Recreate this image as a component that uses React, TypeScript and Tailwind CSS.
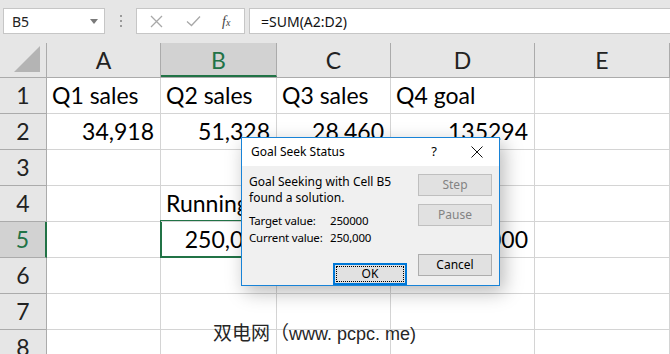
import React from "react";

const COLS = [
  { k: "A", w: 114 },
  { k: "B", w: 116 },
  { k: "C", w: 114 },
  { k: "D", w: 144 },
  { k: "E", w: 135 },
];

type Cell = { t: string; align?: "l" | "r" };
const DATA: Record<number, Record<string, Cell>> = {
  1: {
    A: { t: "Q1 sales" },
    B: { t: "Q2 sales" },
    C: { t: "Q3 sales" },
    D: { t: "Q4 goal" },
  },
  2: {
    A: { t: "34,918", align: "r" },
    B: { t: "51,328", align: "r" },
    C: { t: "28,460", align: "r" },
    D: { t: "135294", align: "r" },
  },
  4: {
    B: { t: "Running total" },
    D: { t: "Total goal" },
  },
  5: {
    B: { t: "250,000", align: "r" },
    D: { t: "250,000", align: "r" },
  },
};

const cellFont = { fontFamily: "Lato, 'Noto Sans', sans-serif" };
const uiFont = { fontFamily: "'Noto Sans', 'Open Sans', sans-serif" };

function Btn({
  label,
  disabled,
  primary,
}: {
  label: string;
  disabled?: boolean;
  primary?: boolean;
}) {
  if (primary) {
    return (
      <div className="w-[74px] h-[22px] border-2 border-[#0078d7] bg-[#e1e1e1] p-[1px]">
        <div className="w-full h-full border border-dotted border-[#000] flex items-center justify-center text-[12px] text-[#000] leading-none">
          {label}
        </div>
      </div>
    );
  }
  return (
    <div
      className={
        "w-[74px] h-[22px] border flex items-center justify-center text-[12px] leading-none " +
        (disabled
          ? "border-[#bfbfbf] bg-[#e1e1e1] text-[#838383]"
          : "border-[#adadad] bg-[#e1e1e1] text-[#000]")
      }
    >
      {label}
    </div>
  );
}

export default function App() {
  const rows = [1, 2, 3, 4, 5, 6, 7, 8];
  return (
    <div className="relative w-[670px] h-[354px] overflow-hidden bg-white">
      {/* formula bar */}
      <div className="h-[43px] bg-[#e6e6e6] flex items-start pt-[8px]" style={uiFont}>
        <div className="ml-[3px] w-[102px] h-[26px] bg-white border border-[#c6c6c6] flex items-center justify-between pl-[8px] pr-[6px]">
          <span className="text-[14px] text-[#222]">B5</span>
          <svg width="8" height="5" viewBox="0 0 8 5">
            <path d="M0 0 L8 0 L4 5 Z" fill="#7a7a7a" />
          </svg>
        </div>
        <div className="w-[31px] h-[26px] flex flex-col items-center justify-center gap-[3px]">
          <div className="w-[2px] h-[2px] bg-[#9a9a9a]" />
          <div className="w-[2px] h-[2px] bg-[#9a9a9a]" />
          <div className="w-[2px] h-[2px] bg-[#9a9a9a]" />
        </div>
        <div className="w-[109px] h-[26px] bg-white border border-[#c6c6c6] flex items-center">
          <svg width="13" height="13" viewBox="0 0 13 13" className="ml-[13px]">
            <path d="M1 1 L12 12 M12 1 L1 12" stroke="#a8a8a8" strokeWidth="1.3" />
          </svg>
          <svg width="15" height="12" viewBox="0 0 15 12" className="ml-[23px]">
            <path d="M1 6.5 L5.5 10.5 L14 1.5" stroke="#a8a8a8" strokeWidth="1.3" fill="none" />
          </svg>
          <span
            className="ml-[21px] text-[14px] italic text-[#444]"
            style={{ fontFamily: "'Liberation Serif', serif" }}
          >
            f<span className="text-[10px]">x</span>
          </span>
        </div>
        <div className="ml-[4px] flex-1 h-[26px] bg-white border border-[#c6c6c6] border-r-0 flex items-center pl-[11px]">
          <span className="text-[14px] text-[#111]">=SUM(A2:D2)</span>
        </div>
      </div>

      {/* column headers */}
      <div className="flex h-[35px] bg-[#e6e6e6] border-b border-[#ababab]" style={cellFont}>
        <div className="w-[47px] h-full relative border-r border-[#ababab]">
          <svg width="28" height="28" viewBox="0 0 28 28" className="absolute right-[4px] bottom-[3px]">
            <path d="M26 0 L26 26 L0 26 Z" fill="#b4b4b4" />
          </svg>
        </div>
        {COLS.map((c) => {
          const sel = c.k === "B";
          return (
            <div
              key={c.k}
              style={{ width: c.w }}
              className={
                "h-full flex items-center justify-center text-[23px] " +
                (sel
                  ? "bg-[#d2d2d2] text-[#217346] border-b-2 border-[#217346] border-r border-r-[#ababab]"
                  : "text-[#222] border-r border-[#ababab]")
              }
            >
              <span className={sel ? "mt-[2px]" : ""}>{c.k}</span>
            </div>
          );
        })}
      </div>

      {/* rows */}
      <div style={cellFont}>
        {rows.map((r) => (
          <div key={r} className="flex h-[36px]">
            <div
              className={
                "w-[47px] h-full flex items-center justify-center text-[23px] border-b " +
                (r === 5
                  ? "bg-[#d2d2d2] text-[#217346] border-r-2 border-r-[#217346] border-b-[#ababab]"
                  : "bg-[#e6e6e6] text-[#222] border-r border-r-[#ababab] border-b-[#ababab]")
              }
            >
              {r}
            </div>
            {COLS.map((c) => {
              const cell = DATA[r]?.[c.k];
              const overflow = r === 4 && c.k === "B";
              return (
                <div
                  key={c.k}
                  style={{ width: c.w }}
                  className={
                    "relative h-full flex items-center text-[23px] text-[#000] whitespace-nowrap border-b border-[#d4d4d4] " +
                    (overflow ? "" : "border-r ") +
                    (cell?.align === "r" ? "justify-end pr-[6px]" : "pl-[5px]") +
                    (overflow ? " z-10" : " overflow-hidden")
                  }
                >
                  {cell ? <span className="leading-none">{cell.t}</span> : null}
                </div>
              );
            })}
          </div>
        ))}
      </div>

      {/* selected cell border */}
      <div className="absolute left-[160px] top-[220px] w-[118px] h-[38px] border-2 border-[#217346] pointer-events-none" />

      {/* dialog */}
      <div
        className="absolute left-[241px] top-[137px] w-[259px] h-[149px] border border-[#1883d7] bg-[#f0f0f0] flex flex-col z-20"
        style={{ ...uiFont, boxShadow: "4px 6px 18px rgba(0,0,0,0.28)" }}
      >
        <div className="h-[30px] bg-white flex items-center pl-[9px] pr-[16px]">
          <span className="text-[12px] text-[#000]">Goal Seek Status</span>
          <span className="ml-auto text-[13px] text-[#000] mr-[34px]">?</span>
          <svg width="12" height="12" viewBox="0 0 12 12">
            <path d="M0.5 0.5 L11.5 11.5 M11.5 0.5 L0.5 11.5" stroke="#111" strokeWidth="1" />
          </svg>
        </div>
        <div className="flex-1 flex pl-[7px] pt-[8px] pr-[7px]">
          <div className="flex-1 text-[12px] text-[#000] leading-[16px]">
            <div>Goal Seeking with Cell B5</div>
            <div>found a solution.</div>
            <div className="mt-[7px] flex text-[11.5px] tracking-[-0.2px] whitespace-nowrap">
              <span className="w-[81px]">Target value:</span>
              <span>250000</span>
            </div>
            <div className="mt-[1px] flex text-[11.5px] tracking-[-0.2px] whitespace-nowrap">
              <span className="w-[81px]">Current value:</span>
              <span>250,000</span>
            </div>
            <div className="mt-[17px] flex justify-end pr-[11px]">
              <Btn label="OK" primary />
            </div>
          </div>
          <div className="flex flex-col">
            <Btn label="Step" disabled />
            <div className="h-[8px]" />
            <Btn label="Pause" disabled />
            <div className="h-[28px]" />
            <Btn label="Cancel" />
          </div>
        </div>
      </div>

      {/* watermark */}
      <div className="absolute left-[213px] top-[318px] text-[#262626] z-30 whitespace-nowrap flex items-baseline">
        <span
          className="text-[19px]"
          style={{ fontFamily: "'Noto Sans CJK SC', sans-serif" }}
        >
          双电网（
        </span>
        <span
          className="text-[18px]"
          style={{ fontFamily: "'Liberation Sans', sans-serif" }}
        >
          www. pcpc. me)
        </span>
      </div>
    </div>
  );
}
